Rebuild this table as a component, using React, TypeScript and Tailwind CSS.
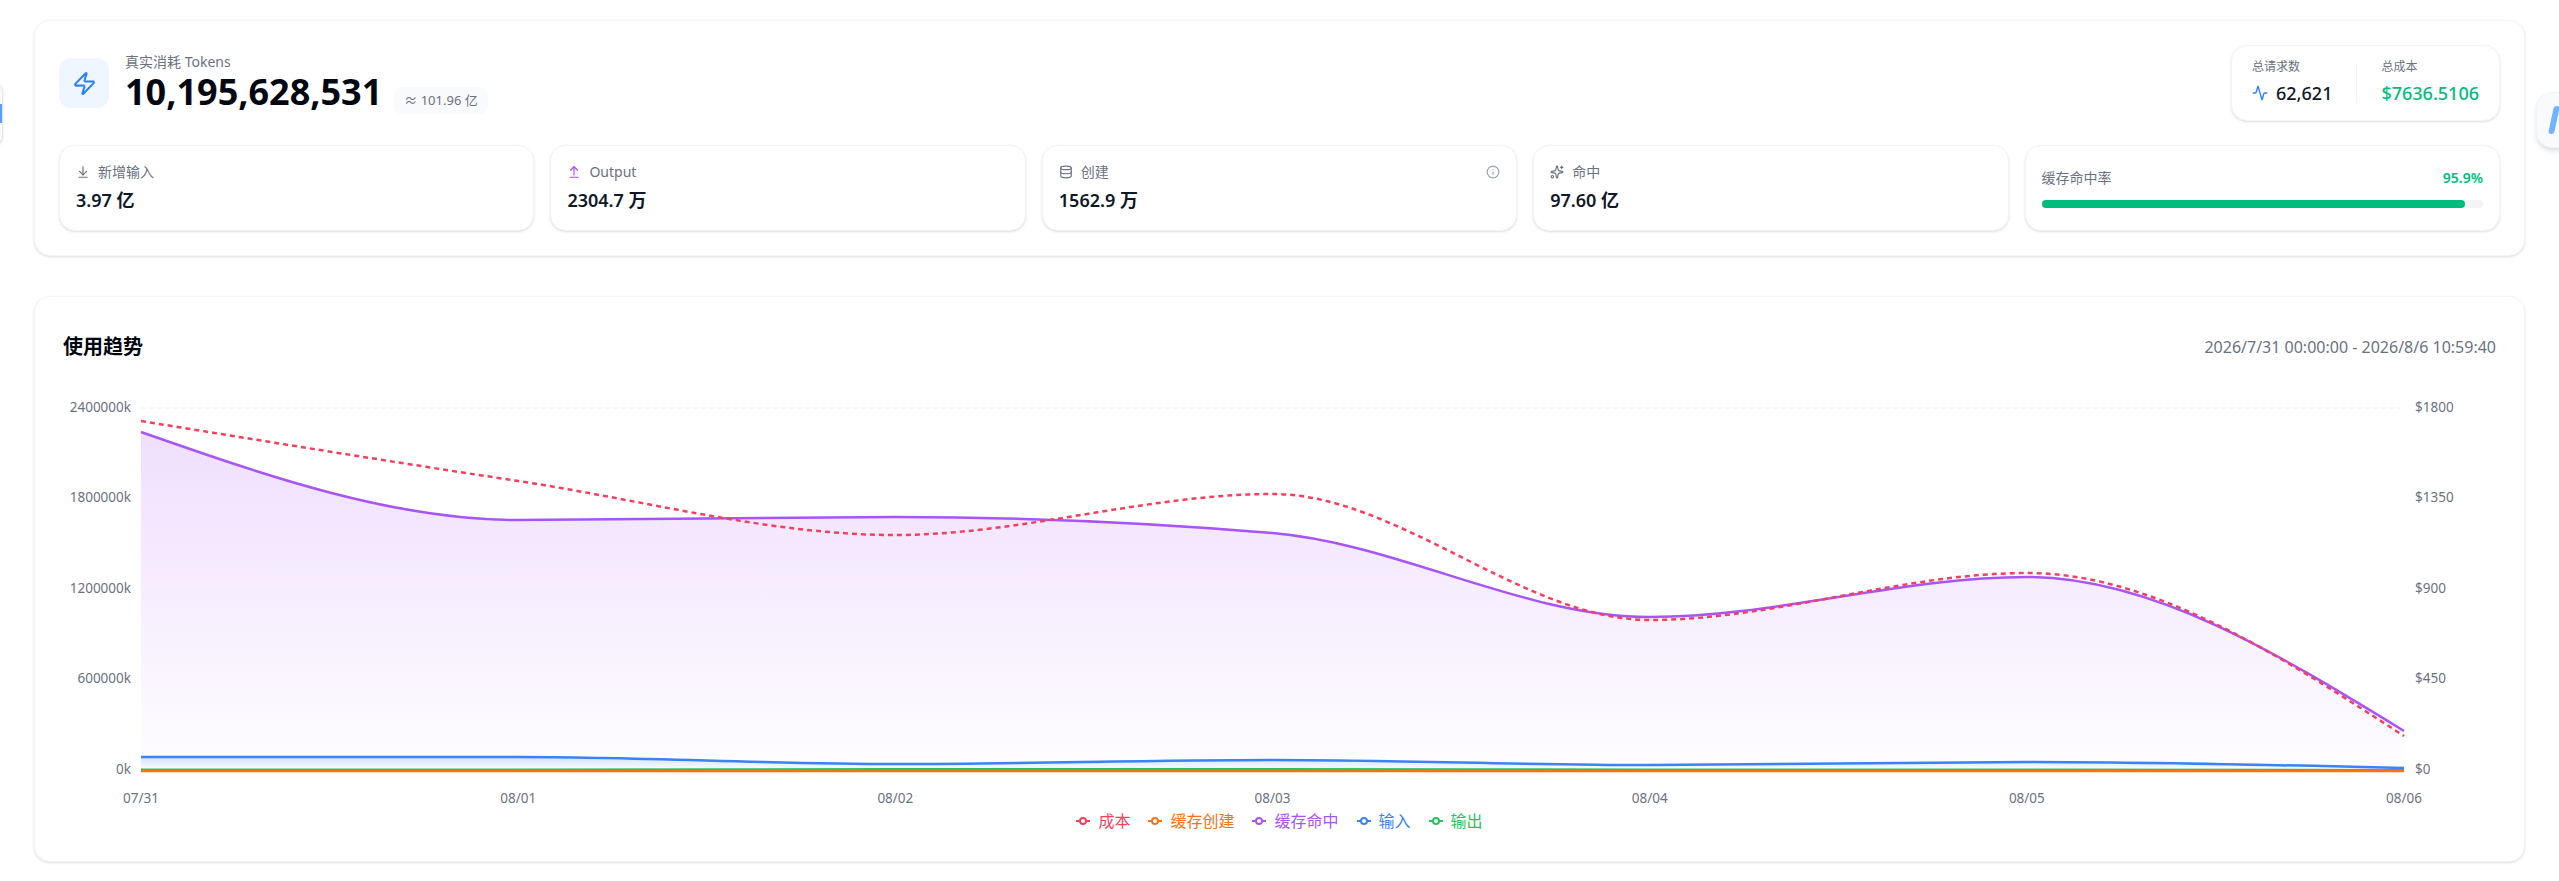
import React from 'react';
import { Zap, Activity, ArrowDownToLine, ArrowUpFromLine, Database, Sparkles, Info } from 'lucide-react';

type Pt = [number, number];

// monotone-x cubic, same shape as recharts "monotone"
const monotone = (pts: Pt[]): string => {
  const n = pts.length;
  const sl: number[] = [];
  for (let i = 0; i < n - 1; i++) sl.push((pts[i + 1][1] - pts[i][1]) / (pts[i + 1][0] - pts[i][0]));
  const t: number[] = new Array(n).fill(0);
  for (let i = 1; i < n - 1; i++) {
    const h0 = pts[i][0] - pts[i - 1][0];
    const h1 = pts[i + 1][0] - pts[i][0];
    const s0 = sl[i - 1];
    const s1 = sl[i];
    const p = (s0 * h1 + s1 * h0) / (h0 + h1);
    t[i] = (Math.sign(s0) + Math.sign(s1)) * Math.min(Math.abs(s0), Math.abs(s1), 0.5 * Math.abs(p)) || 0;
  }
  t[0] = (3 * sl[0] - t[1]) / 2;
  t[n - 1] = (3 * sl[n - 2] - t[n - 2]) / 2;
  let d = `M${pts[0][0]},${pts[0][1]}`;
  for (let i = 0; i < n - 1; i++) {
    const [x0, y0] = pts[i];
    const [x1, y1] = pts[i + 1];
    const dx = (x1 - x0) / 3;
    d += ` C${x0 + dx},${y0 + dx * t[i]} ${x1 - dx},${y1 - dx * t[i + 1]} ${x1},${y1}`;
  }
  return d;
};

const X0 = 77;
const STEP = 377.17;
const BASE = 381;
const TOP = 19;
const xs = [0, 1, 2, 3, 4, 5, 6].map((i) => X0 + i * STEP);
const toPts = (ys: number[]): Pt[] => ys.map((y, i) => [xs[i], y]);

const hit = toPts([43, 131, 128, 144, 228, 188, 342]);
const cost = toPts([32, 92, 146, 105, 231, 184, 347]);
const input = toPts([368, 368, 375, 371, 376, 373, 379]);
const create = toPts([382, 382, 382, 382, 382, 382, 382]);
const output = toPts([380.5, 380.5, 380, 380, 380.5, 380.5, 381]);

const area = (pts: Pt[]) => `${monotone(pts)} L${pts[pts.length - 1][0]},${BASE} L${pts[0][0]},${BASE} Z`;

const dates = ['07/31', '08/01', '08/02', '08/03', '08/04', '08/05', '08/06'];
const leftTicks = ['0k', '600000k', '1200000k', '1800000k', '2400000k'];
const rightTicks = ['$0', '$450', '$900', '$1350', '$1800'];

const legend = [
  { label: '成本', color: '#f43f5e' },
  { label: '缓存创建', color: '#f97316' },
  { label: '缓存命中', color: '#a855f7' },
  { label: '输入', color: '#3b82f6' },
  { label: '输出', color: '#22c55e' },
];

const StatCard: React.FC<{ icon: React.ReactNode; label: string; value: string; info?: boolean }> = ({ icon, label, value, info }) => (
  <div className="rounded-2xl border border-gray-100 bg-white p-4 shadow-sm">
    <div className="flex items-center justify-between">
      <div className="flex items-center gap-2 text-sm text-gray-500">
        {icon}
        <span>{label}</span>
      </div>
      {info && <Info size={14} className="text-gray-400" />}
    </div>
    <div className="mt-1 text-lg font-semibold text-gray-900">{value}</div>
  </div>
);

const Chart: React.FC = () => {
  const H = 420;
  const W = 2431;
  const tickY = (i: number) => BASE - (i * (BASE - TOP)) / 4;
  return (
    <svg viewBox={`0 0 ${W} ${H}`} width={W} height={H} className="block w-full">
      <defs>
        <linearGradient id="hitFill" x1="0" y1={TOP} x2="0" y2={BASE} gradientUnits="userSpaceOnUse">
          <stop offset="0" stopColor="#a855f7" stopOpacity="0.2" />
          <stop offset="1" stopColor="#a855f7" stopOpacity="0.01" />
        </linearGradient>
        <linearGradient id="inFill" x1="0" y1="366" x2="0" y2={BASE} gradientUnits="userSpaceOnUse">
          <stop offset="0" stopColor="#3b82f6" stopOpacity="0.25" />
          <stop offset="1" stopColor="#3b82f6" stopOpacity="0" />
        </linearGradient>
      </defs>
      <line x1={X0} x2={xs[6]} y1={TOP} y2={TOP} stroke="#eceef1" strokeDasharray="4 4" />
      {leftTicks.map((t, i) => (
        <text key={t} x={67} y={tickY(i)} textAnchor="end" dominantBaseline="middle" fontSize="13.5" fill="#6b7280">
          {t}
        </text>
      ))}
      {rightTicks.map((t, i) => (
        <text key={t} x={2351} y={tickY(i)} textAnchor="start" dominantBaseline="middle" fontSize="13.5" fill="#6b7280">
          {t}
        </text>
      ))}
      {dates.map((d, i) => (
        <text key={d} x={xs[i]} y={410} textAnchor="middle" dominantBaseline="middle" fontSize="13.5" fill="#6b7280">
          {d}
        </text>
      ))}
      <path d={area(hit)} fill="url(#hitFill)" />
      <path d={area(input)} fill="url(#inFill)" />
      <path d={monotone(hit)} fill="none" stroke="#a855f7" strokeWidth="2.5" />
      <path d={monotone(input)} fill="none" stroke="#3b82f6" strokeWidth="2.5" />
      <path d={monotone(output)} fill="none" stroke="#22c55e" strokeWidth="2" />
      <path d={monotone(create)} fill="none" stroke="#f97316" strokeWidth="2.5" />
      <path d={monotone(cost)} fill="none" stroke="#f43f5e" strokeWidth="2.5" strokeDasharray="5 4" />
    </svg>
  );
};

export default function App() {
  return (
    <div
      className="relative min-h-screen overflow-hidden bg-white px-[34px] pt-5 pb-5 text-gray-900"
      style={{ fontFamily: '"Noto Sans", "Noto Sans CJK SC", sans-serif' }}
    >
      {/* peeking floating cards at the window edges */}
      <div className="absolute top-[80px] left-[-60px] h-[67px] w-[63px] rounded-xl border border-gray-200 bg-gray-50 shadow-sm">
        <div className="absolute top-[23px] right-0 h-[19px] w-[3px] bg-blue-400" />
      </div>
      <div className="absolute top-[92px] left-[2536px] h-[56px] w-[70px] rounded-2xl border border-gray-100 bg-gray-50 shadow-md">
        <div className="absolute top-[13px] left-[14px] h-[28px] w-[6px] -skew-x-12 rounded-sm bg-blue-400/80" />
      </div>

      <section className="rounded-2xl border border-gray-100 bg-white p-6 shadow-sm">
        <div className="flex items-center justify-between">
          <div className="flex items-center gap-4">
            <div className="flex h-[50px] w-[50px] items-center justify-center rounded-xl bg-blue-50">
              <Zap size={25} strokeWidth={2} className="text-blue-500" />
            </div>
            <div>
              <div className="text-sm text-gray-500">真实消耗 Tokens</div>
              <div className="flex items-baseline gap-3">
                <span className="text-4xl font-bold text-gray-950">10,195,628,531</span>
                <span className="rounded-lg bg-gray-50 px-2.5 py-1 text-[13px] text-gray-500">≈ 101.96 亿</span>
              </div>
            </div>
          </div>
          <div className="flex items-center gap-6 rounded-2xl border border-gray-100 bg-white px-5 py-[13px] shadow-sm">
            <div>
              <div className="text-xs text-gray-500">总请求数</div>
              <div className="mt-1 flex items-center gap-2">
                <Activity size={16} className="text-blue-500" />
                <span className="text-lg font-medium text-gray-900">62,621</span>
              </div>
            </div>
            <div className="h-10 w-px bg-gray-100" />
            <div>
              <div className="text-xs text-gray-500">总成本</div>
              <div className="mt-1 text-lg font-medium text-emerald-500">$7636.5106</div>
            </div>
          </div>
        </div>

        <div className="mt-6 grid grid-cols-5 gap-4">
          <StatCard icon={<ArrowDownToLine size={14} className="text-gray-500" />} label="新增输入" value="3.97 亿" />
          <StatCard icon={<ArrowUpFromLine size={14} className="text-purple-500" />} label="Output" value="2304.7 万" />
          <StatCard icon={<Database size={14} className="text-gray-500" />} label="创建" value="1562.9 万" info />
          <StatCard icon={<Sparkles size={14} className="text-gray-500" />} label="命中" value="97.60 亿" />
          <div className="flex flex-col justify-center rounded-2xl border border-gray-100 bg-white px-4 shadow-sm">
            <div className="mb-3 flex items-center justify-between">
              <span className="text-sm text-gray-500">缓存命中率</span>
              <span className="text-sm font-semibold text-emerald-500">95.9%</span>
            </div>
            <div className="h-2 w-full rounded-full bg-gray-100">
              <div className="h-2 rounded-full bg-emerald-500" style={{ width: '95.9%' }} />
            </div>
          </div>
        </div>
      </section>

      <section className="mt-10 rounded-2xl border border-gray-100 bg-white px-7 pt-9 pb-7 shadow-sm">
        <div className="flex items-center justify-between">
          <h2 className="text-xl font-bold text-gray-950">使用趋势</h2>
          <span className="text-base text-gray-500">2026/7/31 00:00:00 - 2026/8/6 10:59:40</span>
        </div>
        <div className="mt-7">
          <Chart />
        </div>
        <div className="flex items-center justify-center gap-[18px]">
          {legend.map((l) => (
            <div key={l.label} className="flex items-center gap-2 text-base" style={{ color: l.color }}>
              <svg width="14" height="14" viewBox="0 0 14 14">
                <line x1="0" y1="7" x2="14" y2="7" stroke={l.color} strokeWidth="2" />
                <circle cx="7" cy="7" r="3" fill="#fff" stroke={l.color} strokeWidth="2" />
              </svg>
              <span>{l.label}</span>
            </div>
          ))}
        </div>
      </section>
    </div>
  );
}
